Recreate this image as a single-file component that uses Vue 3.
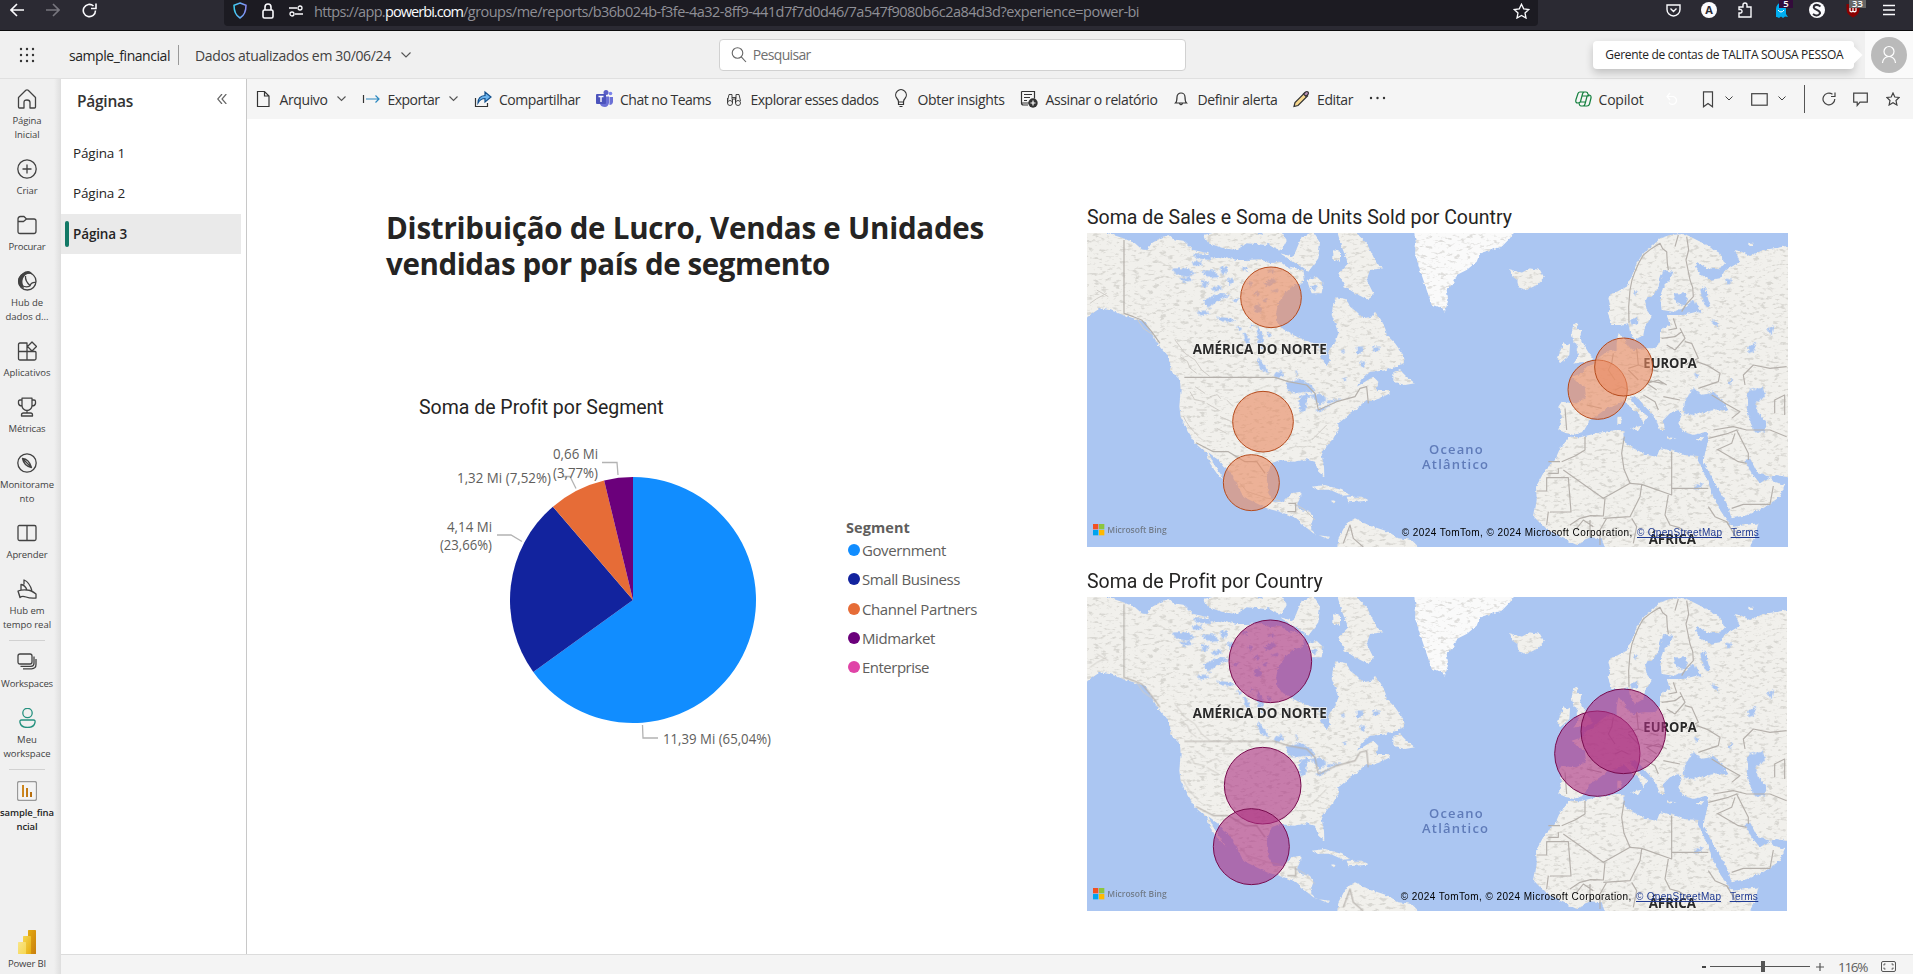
<script setup>
// Tracks a label out (or in) so that it fills the given width.
const vFit = {
  mounted(el, { value }) {
    const n = el.textContent.length
    el.style.letterSpacing = (value - el.getBoundingClientRect().width) / n + 'px'
  },
}

const tools = [
  { id: 'file', label: 'Arquivo', w: 48, more: true },
  { id: 'export', label: 'Exportar', w: 52, more: true },
  { id: 'share', label: 'Compartilhar', w: 81 },
  { id: 'teams', label: 'Chat no Teams', w: 91 },
  { id: 'explore', label: 'Explorar esses dados', w: 128 },
  { id: 'bulb', label: 'Obter insights', w: 87 },
  { id: 'subscribe', label: 'Assinar o relatório', w: 112 },
  { id: 'bell', label: 'Definir alerta', w: 80 },
  { id: 'pencil', label: 'Editar', w: 36 },
]

const nav = [
  { id: 'home', lines: [['Página', 29], ['Inicial', 25]] },
  { id: 'plus', lines: [['Criar', 21]] },
  { id: 'folder', lines: [['Procurar', 37]] },
  { id: 'hub', lines: [['Hub de', 32], ['dados d...', 43]] },
  { id: 'apps', lines: [['Aplicativos', 47]] },
  { id: 'cup', lines: [['Métricas', 37]] },
  { id: 'compass', lines: [['Monitorame', 54], ['nto', 15]] },
  { id: 'book', lines: [['Aprender', 41]] },
  { id: 'live', lines: [['Hub em', 35], ['tempo real', 48]] },
  { id: 'spaces', sep: true, lines: [['Workspaces', 52]] },
  { id: 'me', lines: [['Meu', 20], ['workspace', 47]] },
  { id: 'report', sep: true, active: true, lines: [['sample_fina', 54], ['ncial', 21]] },
]

const segments = [
  { label: 'Government', w: 84, color: '#118DFF', share: 65.05 },
  { label: 'Small Business', w: 98, color: '#12239E', share: 23.66 },
  { label: 'Channel Partners', w: 115, color: '#E66C37', share: 7.52 },
  { label: 'Midmarket', w: 73, color: '#6B007B', share: 3.77 },
  { label: 'Enterprise', w: 67, color: '#E044A7', share: 0 },
]

function slices() {
  let acc = 0
  const pt = (f) => {
    const a = f * 2 * Math.PI
    return `${(213 + 123 * Math.sin(a)).toFixed(2)} ${(170 - 123 * Math.cos(a)).toFixed(2)}`
  }
  return segments.filter((s) => s.share).map((s) => {
    const from = acc
    acc += s.share / 100
    return { color: s.color, d: `M213 170L${pt(from)}A123 123 0 ${s.share > 50 ? 1 : 0} 1 ${pt(acc)}Z` }
  })
}
const pie = slices()

const maps = [
  {
    id: 'sales', title: 'Soma de Sales e Soma de Units Sold por Country', w: 425, credit: 965,
    bubbles: [[573, 292, 91], [549, 665, 91], [514, 848, 84], [1553, 569, 89], [1631, 501, 87]],
  },
  {
    id: 'profit', title: 'Soma de Profit por Country', w: 235, credit: 962,
    bubbles: [[571, 292, 124], [548, 665, 115], [514, 848, 114], [1552, 569, 128], [1630, 502, 127]],
  },
]
</script>

<template>
  <div class="window">
    <svg class="defs" width="0" height="0">
      <filter id="coast" x="0" y="0" width="100%" height="100%" color-interpolation-filters="sRGB">
        <feTurbulence type="fractalNoise" baseFrequency="0.09" numOctaves="3" seed="4" result="n" />
        <feDisplacementMap in="SourceGraphic" in2="n" scale="10" xChannelSelector="R" yChannelSelector="G" result="land" />
        <feTurbulence type="fractalNoise" baseFrequency="0.05 0.11" numOctaves="3" seed="9" result="hills" />
        <feColorMatrix in="hills" type="matrix" values="0 0 0 0 0.62  0 0 0 0 0.61  0 0 0 0 0.58  5 0 0 0 -2.7" result="shade" />
        <feComposite in="shade" in2="land" operator="in" result="cut" />
        <feComponentTransfer in="cut" result="soft"><feFuncA type="linear" slope="0.3" /></feComponentTransfer>
        <feMerge><feMergeNode in="land" /><feMergeNode in="soft" /></feMerge>
      </filter>
      <filter id="rough" x="0" y="0" width="100%" height="100%">
        <feTurbulence type="fractalNoise" baseFrequency="0.13" numOctaves="2" seed="2" />
        <feDisplacementMap in="SourceGraphic" scale="14" xChannelSelector="R" yChannelSelector="G" />
      </filter>
      <linearGradient id="shieldTone" x1="0" y1="0" x2="1" y2="0"><stop offset="0" stop-color="#3fd0f5" /><stop offset="1" stop-color="#8a8cf5" /></linearGradient>
      <linearGradient id="biA" x1="0" y1="0" x2="1" y2="1"><stop offset="0" stop-color="#e6ad10" /><stop offset="1" stop-color="#c87e0e" /></linearGradient>
      <linearGradient id="biB" x1="0" y1="0" x2="1" y2="1"><stop offset="0" stop-color="#f6d751" /><stop offset="1" stop-color="#e6ad10" /></linearGradient>
      <linearGradient id="biC" x1="0" y1="0" x2="1" y2="1"><stop offset="0" stop-color="#f9e589" /><stop offset="1" stop-color="#f6d751" /></linearGradient>
      <linearGradient id="barTone" x1="0" y1="0" x2="1" y2="0"><stop offset="0" stop-color="#d08a20" /><stop offset="1" stop-color="#b56c0c" /></linearGradient>
    </svg>

    <div class="browser">
      <div class="browser-nav">
        <svg width="14" height="14" viewBox="0 0 14 14" class="ln white"><path d="M14 7H1M7 1L1 7l6 6" /></svg>
        <svg width="14" height="14" viewBox="0 0 14 14" class="ln dim"><path d="M0 7h13M7 1l6 6-6 6" /></svg>
        <svg width="15" height="15" viewBox="0 0 15 15" class="ln white"><path d="M13.5 7.5a6.1 6.1 0 1 1-2-4.5M14 0.5v5h-5" /></svg>
      </div>
      <div class="url">
        <svg width="14" height="17" viewBox="0 0 14 17"><path d="M7 1L13 3.3C13 10 11.5 13.500 7 16 2.500 13.500 1 10 1 3.300Z" fill="none" stroke="url(#shieldTone)" stroke-width="1.500" /></svg>
        <svg width="12" height="16" viewBox="0 0 12 16" class="ln white"><rect x="1" y="7" width="10" height="8" rx="1.500" /><path d="M3 7V4a3 3 0 0 1 6 0v3" /></svg>
        <svg width="14" height="12" viewBox="0 0 14 12" class="ln white thin"><path d="M0 3h8M6 9h8" /><circle cx="11" cy="3" r="2" /><circle cx="3" cy="9" r="2" /></svg>
        <span class="address"><span v-fit="71">https://app.</span><b v-fit="78">powerbi.com</b><span v-fit="676">/groups/me/reports/b36b024b-f3fe-4a32-8ff9-441d7f7d0d46/7a547f9080b6c2a84d3d?experience=power-bi</span></span>
        <svg class="end" width="17" height="16" viewBox="0 0 17 16"><path d="M8.500 1.200l2.200 4.700 5 .6-3.700 3.500 1 5-4.500-2.500L4 15l1-5L1.300 6.500l5-.6z" fill="none" stroke="#fbfbfe" stroke-width="1.300" /></svg>
      </div>
      <div class="extensions">
        <svg width="36" height="24" viewBox="0 0 36 24" class="ln light"><path d="M12 5h13v4.500a6.500 6.500 0 0 1-13 0zM15.500 8.500l3 3 3-3" /></svg>
        <svg width="36" height="24" viewBox="0 0 36 24"><circle cx="18" cy="10" r="8" fill="#fbfbfe" /><text x="18" y="14" class="glyph" text-anchor="middle">A</text></svg>
        <svg width="36" height="24" viewBox="0 0 36 24" class="ln light"><path d="M12 17v-4h2a2 2 0 0 0 0-3.500h-2V7h4V5a2 2 0 0 1 4 0v2h4v10z" /></svg>
        <svg width="36" height="24" viewBox="0 0 36 24"><path d="M13 17V9a5 6 0 0 1 10 0v5l2 3-3-.5-2 1.500-2-1.500-2 1.500-2-1z" fill="#00aef0" /><path d="M15 10q3 4 6 0" stroke="#fff" fill="none" /><rect x="16" y="0" width="14" height="8" fill="#330b3b" /><text x="23" y="7" class="badge-num" text-anchor="middle">5</text></svg>
        <svg width="36" height="24" viewBox="0 0 36 24"><circle cx="18" cy="10" r="8" fill="#fbfbfe" /><path d="M21.500 6.500q-4-3-6.500-.5c-2 4 7 3.500 6 7.500-2 3-5 2-7 .5" fill="none" stroke="#2b2a33" stroke-width="2" /></svg>
        <svg width="36" height="24" viewBox="0 0 36 24"><path d="M11.500 4h13v5q0 5.500-6.500 8.500-6.500-3-6.500-8.500z" fill="#8a0000" /><path d="M15 8v3q1.500 1.500 3 0V8m0 3q1.500 1.500 3 0V8" stroke="#fff" fill="none" stroke-width="1.200" /><rect x="14" y="0" width="17" height="8" fill="#666" /><text x="22.500" y="7" class="badge-num" text-anchor="middle">33</text></svg>
        <svg width="36" height="24" viewBox="0 0 36 24" class="ln light"><path d="M12 5.500h12M12 10h12M12 14.500h12" /></svg>
      </div>
    </div>

    <header class="header">
      <svg class="waffle" width="16" height="16" viewBox="0 0 16 16"><g fill="#333"><circle v-for="i in 9" :key="i" :cx="2 + ((i - 1) % 3) * 6" :cy="2 + Math.floor((i - 1) / 3) * 6" r="1.200" /></g></svg>
      <span class="doc"><span v-fit="101">sample_financial</span></span>
      <span class="fresh"><span v-fit="196">Dados atualizados em 30/06/24</span></span>
      <svg class="chev" width="10" height="6" viewBox="0 0 10 6"><path d="M.5.5L5 5 9.500.5" /></svg>
      <div class="search">
        <svg width="16" height="16" viewBox="0 0 16 16"><g fill="none" stroke="#666" stroke-width="1.100"><circle cx="6.500" cy="6" r="5.300" /><path d="M10.300 9.800L15 15" /></g></svg>
        <span v-fit="58">Pesquisar</span>
      </div>
      <div class="tip"><span v-fit="238">Gerente de contas de TALITA SOUSA PESSOA</span></div>
      <div class="account"><svg width="36" height="36" viewBox="0 0 36 36"><circle cx="18" cy="18" r="18" fill="#bababa" /><g fill="none" stroke="#fff" stroke-width="1.200"><circle cx="18" cy="14.500" r="5" /><path d="M11.500 26a6.500 6.500 0 0 1 13 0" /></g></svg></div>
    </header>

    <div class="body">
      <nav class="rail">
        <template v-for="n in nav" :key="n.id">
          <hr v-if="n.sep" />
          <div class="rail-item" :class="{ active: n.active }">
            <svg width="20" height="20" viewBox="0 0 20 20" class="ri">
              <path v-if="n.id === 'home'" d="M1.500 8.500L8.800 1.300q1.200-1 2.400 0l7.300 7.200V18q0 1-1 1H13v-5.500q0-2.500-3-2.500t-3 2.500V19H2.500q-1 0-1-1z" />
              <template v-else-if="n.id === 'plus'"><circle cx="10" cy="10" r="9.200" /><path d="M10 5.500v9M5.500 10h9" /></template>
              <path v-else-if="n.id === 'folder'" d="M1 15V4q0-2.500 2.500-2.500H7L9.500 4H17q2 0 2 2v10q0 2.500-2 2.500H3Q1 18.500 1 16.500zM1 6.500h5.500L9.500 4" />
              <template v-else-if="n.id === 'hub'"><circle cx="10.300" cy="10.300" r="8.700" /><path d="M6 2Q8 0 11 0t5 3.500Q12 1.800 8.500 4 5 7 5.500 12L7 17.500Q1 15.500 1 10 1 6 6 2z" fill="#424242" stroke="none" /><path d="M8.500 5q-.5 5 4.500 9.500M13 15q1-4 6-3.500M5 14.500q4 2.500 8 .5" /></template>
              <path v-else-if="n.id === 'apps'" d="M1.500 10.500V3.500q0-1.500 1.500-1.500h7v17H3q-1.500 0-1.500-1.500zh16.500q1 0 1 1v6q0 1.500-1.500 1.500H10M15 1l4.500 4.500L15 10 10.500 5.500z" />
              <path v-else-if="n.id === 'cup'" d="M5 1.200h10v7.300a5 5 0 0 1-10 0zM5 3H3Q1.500 3 1.500 4.500v2Q2 9 5 9M15 3h2q1.500 0 1.500 1.500v2Q18 9 15 9M10 13.500V16M4.500 19v-1q0-2 2-2h7q2 0 2 2v1z" />
              <template v-else-if="n.id === 'compass'"><circle cx="10" cy="10" r="9.200" /><path d="M5.500 5.500Q12 6 14.500 14.500 7 13 5.500 5.500zM5.500 5.500l9 9" /></template>
              <path v-else-if="n.id === 'book'" d="M10 2.500H2.500Q1 2.500 1 4v12q0 1.500 1.500 1.500H10zh7.500Q19 2.500 19 4v12q0 1.500-1.500 1.500H10" />
              <path v-else-if="n.id === 'live'" d="M1 12q4-1.500 9-1 4 0 9 4v4q-6 .5-10-1t-6 .5zM4 11V5.500q4 .5 6 5.500M7 5.500V1q5.500 2 8 11M1 12l2 6" />
              <path v-else-if="n.id === 'spaces'" d="M3 2h10q2 0 2 2v6q0 2-2 2H3q-2 0-2-2V4q0-2 2-2zM3.500 14.300H14q3 0 3-3V4.500M6 16.800h8.500q4.500 0 4.500-4.500V7" />
              <g v-else-if="n.id === 'me'" stroke="#25917f"><circle cx="10.500" cy="5" r="4.700" /><path d="M4.500 12h12q2 0 1.500 2.500-1 5-7.500 5t-7.500-5Q2.500 12 4.500 12z" /></g>
              <g v-else stroke="none"><rect x=".5" y=".5" width="19" height="19" rx="2" fill="#f4f4f4" stroke="#999" /><path d="M5 4h2v12H5zM9 7h2v9H9zM13 11h2v5h-2z" fill="url(#barTone)" /></g>
            </svg>
            <span v-for="l in n.lines" :key="l[0]" class="rail-line"><span v-fit="l[1]">{{ l[0] }}</span></span>
          </div>
        </template>
        <div class="brand">
          <svg width="18" height="24" viewBox="0 0 18 24"><rect x="10" width="8" height="24" rx=".6" fill="url(#biA)" /><rect x="5" y="6" width="8" height="18" rx=".6" fill="url(#biB)" /><rect y="12" width="8" height="12" rx=".6" fill="url(#biC)" /></svg>
          <span v-fit="38">Power BI</span>
        </div>
      </nav>

      <div class="work">
        <div class="panes">
          <aside class="pages">
            <div class="pages-head"><b v-fit="56">Páginas</b><svg width="10" height="10" viewBox="0 0 10 10"><path d="M5 0L.7 5 5 10M9.300 0L5 5l4.300 5" fill="none" stroke="#666" stroke-width="1.200" /></svg></div>
            <ul>
              <li><span v-fit="52">Página 1</span></li>
              <li><span v-fit="52">Página 2</span></li>
              <li class="on"><i></i><span v-fit="54">Página 3</span></li>
            </ul>
          </aside>

          <section class="content">
            <div class="toolbar">
              <div v-for="t in tools" :key="t.id" class="tool">
                <svg width="24" height="20" viewBox="0 0 24 20" class="ti">
                  <path v-if="t.id === 'file'" d="M6.500 2.500H13.500L18 7v10.500H6.500zM13.500 2.500V7H18" />
                  <template v-else-if="t.id === 'export'"><path d="M4.500 6v8" /><path d="M7 10h13M16.500 6.500L20 10l-3.500 3.500" stroke="#2b88c0" /></template>
                  <template v-else-if="t.id === 'share'"><path d="M4.500 9v8.500h12V14" /><path d="M7 14q0-7 7-7.500V3l6 5-6 5v-3.500Q9.500 9.500 7 14z" fill="#6cb4ee" stroke="#124f8c" /></template>
                  <g v-else-if="t.id === 'teams'" stroke="none"><circle cx="14" cy="3.500" r="2.500" fill="#5b5fc7" /><circle cx="18.500" cy="4.500" r="1.800" fill="#7b83eb" /><path d="M10 7.500h7V14q-1 4-4 4-4 0-5-3zM17.500 8h3.500v5q-.5 3-3.500 3z" fill="#6b70d6" /><rect x="4" y="5" width="10" height="10" rx="1" fill="#4b53bc" /><path d="M6.500 7.500h5M9 7.500v5.500" stroke="#fff" stroke-width="1.400" /></g>
                  <path v-else-if="t.id === 'explore'" d="M7 5.500h3v5M14 10.500v-5h3M7 5.500L5.500 12M17 5.500l1.500 6.500M10 8.500h4M5.500 14a2.500 2.500 0 1 1 5 0 2.500 2.500 0 1 1-5 0V9M13.500 14a2.500 2.500 0 1 1 5 0 2.500 2.500 0 1 1-5 0V9M10.500 14v-4h3v4" stroke-width=".9" />
                  <path v-else-if="t.id === 'bulb'" d="M9.500 13q0-2-1.500-3.500A5.300 5.300 0 1 1 16 9.500Q14.500 11 14.500 13zM9.500 13v2.500h5V13M10.500 17.500h3" />
                  <template v-else-if="t.id === 'subscribe'"><path d="M4.500 2.500h13v7M4.500 2.500V14H12M4.500 14q0 2 2 2H11M7 5.500h8M7 8.500h6M7 11.500h3" /><circle cx="16" cy="14" r="4.700" fill="#333" stroke="none" /><path d="M16 11.500v5M13.500 14h5" stroke="#fff" /></template>
                  <path v-else-if="t.id === 'bell'" d="M6.500 14q1.500-1.500 1.500-6a4 4 0 0 1 8 0q0 4.500 1.500 6zM10.500 14.500q1.500 2.500 3 0" />
                  <template v-else><path d="M5 17.500l1-4L15.500 4l3 3L9 16.500z" fill="#f8d88e" stroke="#333" /><path d="M14.500 5l2-2q1.500-1 2.500 0t0 2.500l-2 2z" fill="#b98fb5" stroke="#333" /></template>
                </svg>
                <span class="tool-label"><span v-fit="t.w">{{ t.label }}</span></span>
                <svg v-if="t.more" class="chev" width="9" height="6" viewBox="0 0 9 6"><path d="M.5.5l4 4 4-4" /></svg>
              </div>
              <svg width="24" height="20" viewBox="0 0 24 20" fill="#333"><circle cx="5" cy="9" r="1.200" /><circle cx="11.500" cy="9" r="1.200" /><circle cx="18" cy="9" r="1.200" /></svg>
              <div class="right">
                <svg width="17" height="18" viewBox="0 0 17 18" fill="none" stroke="#15803f" stroke-width="1.300"><path d="M5 2h6q1.500 0 2 2l1 2.500M9.500 2Q8 2 7.500 4L5.500 11.500Q5 13 3 13 0 13 1 9.500L3 3.500Q3.500 2 5 2M12 16H6q-1.500 0-2-3M8 16q1.500 0 2-2l2-7.500q.5-1.500 2.500-1.500 2 .5 1.500 3L14.500 14q-.5 2-2.500 2M7 6h6M5 12h6" /></svg>
                <span v-fit="45">Copilot</span>
                <svg class="undo" width="12" height="14" viewBox="0 0 12 14"><path d="M1 4.500h6a4 4 0 1 1-4 6M4 1L1 4.500 4 8" /></svg>
                <svg class="mark" width="12" height="17" viewBox="0 0 12 17"><path d="M1.500.8h9v15L6 12.500l-4.500 3.300z" /></svg>
                <svg class="chev c1" width="8" height="6" viewBox="0 0 8 6"><path d="M.5.5L4 4 7.500.5" /></svg>
                <svg class="frame" width="17" height="13" viewBox="0 0 17 13"><rect x=".7" y=".7" width="15.500" height="11.500" /></svg>
                <svg class="chev c2" width="8" height="6" viewBox="0 0 8 6"><path d="M.5.5L4 4 7.500.5" /></svg>
                <i class="rule"></i>
                <svg width="14" height="14" viewBox="0 0 14 14"><path d="M12.800 7A5.900 5.900 0 1 1 10.500 2.300M9 4.500h4V.5" /></svg>
                <svg class="say" width="15" height="15" viewBox="0 0 15 15"><path d="M.7 1.200h13.600v9H7L4.200 13.500v-3.300H.7z" /></svg>
                <svg class="fav" width="14" height="14" viewBox="0 0 14 14"><path d="M7 1l1.800 4 4.400.5L10 8.500l.9 4.500L7 10.800 3.100 13 4 8.500.8 5.500 5.200 5z" /></svg>
              </div>
            </div>

            <div class="canvas">
              <div class="left">
                <h1><span v-fit="598">Distribuição de Lucro, Vendas e Unidades</span><br /><span v-fit="444">vendidas por país de segmento</span></h1>
                <h2 class="pie-title"><span v-fit="244">Soma de Profit por Segment</span></h2>
                <div class="pie-row">
                  <svg class="pie" width="400" height="330" viewBox="0 0 400 330">
                    <path v-for="s in pie" :key="s.color" :d="s.d" :fill="s.color" />
                    <g fill="none" stroke="#b3b3b3" stroke-width="1.300"><path d="M182 32.500h15l1 12.500M142 46.500h8l6 12M77 105h14l11 6.500M222.500 295l.5 13h15" /></g>
                    <g class="pie-label">
                      <text x="133" y="29" textLength="45" lengthAdjust="spacingAndGlyphs">0,66 Mi</text>
                      <text x="133" y="47.500" textLength="45" lengthAdjust="spacingAndGlyphs">(3,77%)</text>
                      <text x="37" y="53" textLength="94" lengthAdjust="spacingAndGlyphs">1,32 Mi (7,52%)</text>
                      <text x="27" y="102" textLength="45" lengthAdjust="spacingAndGlyphs">4,14 Mi</text>
                      <text x="20" y="120" textLength="52" lengthAdjust="spacingAndGlyphs">(23,66%)</text>
                      <text x="243" y="314" textLength="108" lengthAdjust="spacingAndGlyphs">11,39 Mi (65,04%)</text>
                    </g>
                  </svg>
                  <div class="legend">
                    <b v-fit="64">Segment</b>
                    <div v-for="s in segments" :key="s.label"><svg width="12" height="12"><circle cx="6" cy="6" r="6" :fill="s.color" /></svg><span v-fit="s.w">{{ s.label }}</span></div>
                  </div>
                </div>
              </div>

              <div class="maps">
                <figure v-for="m in maps" :key="m.id" :class="m.id">
                  <figcaption><span v-fit="m.w">{{ m.title }}</span></figcaption>
                  <svg class="map" viewBox="21 99 2103 942" preserveAspectRatio="xMinYMin slice">
                    <rect x="21" y="99" width="2103" height="942" fill="#abc6f2" />
                    <g filter="url(#coast)" fill="#f1f0ec">
                      <path d="M0 80L80 98 130 115 165 130 185 148 200 150 215 130 240 115 265 105 280 118 310 122 340 150 385 160 400 175 440 172 470 180 500 180 540 178 570 190 600 185 620 200 650 220 670 225 665 250 640 255 615 280 595 310 588 340 592 365 605 385 640 405 670 420 700 430 715 440 725 475 740 498 750 480 745 450 765 430 775 400 765 370 755 345 760 310 770 292 800 298 810 320 830 335 850 355 875 350 885 335 900 355 915 380 920 405 945 430 970 465 975 485 950 500 910 512 870 515 845 540 830 560 880 530 895 545 890 570 925 570 930 580 900 595 870 605 860 600 830 625 800 650 775 670 775 690 760 715 735 745 725 765 732 800 733 830 715 815 705 785 680 778 640 785 600 780 575 790 560 830 565 880 580 905 610 905 635 880 662 875 660 895 650 915 660 930 690 935 700 955 690 985 710 1005 750 1010 745 1017 700 1000 670 975 640 950 600 935 560 925 520 905 490 890 470 850 450 815 430 800 415 780 385 757 400 790 420 820 440 850 410 820 390 790 380 760 345 730 320 690 302 650 298 620 302 570 300 540 270 510 275 490 255 460 235 435 215 400 195 365 160 355 130 345 90 330 60 325 30 345 0 370Z" />
                      <path d="M370 105L440 90 520 95 580 115 560 135 500 130 470 150 430 145 385 130ZM540 90h60l20 30-15 30-30-10zM600 160l40 10 25-60 35-15 20 30-5 50-30 40-30-20zM630 200l40 10 5 30-30 10zM680 240l30-10 20 20-5 30-30 0zM770 90l50 0 40 40 30 60 20 15-40 5-10 30 20 40-15 20-40-20-30-20-20-40 30-30-20-50zM760 150l20 5 0 30-20-5zM940 520l20-10 20 20 25 20-30 5-35-10z" />
                      <path d="M695 860l40-5 50 15 25 15-20 2-40-18-40 0zM800 890l45 0 20 12-60 5zM755 900l20 5-20 2zM770 1060l5-45 25-45 25-15 40 20 60 20 30 20 40 5 20 20 60 20z" />
                      <g transform="translate(1050)">
                        <path d="M-50 80L-42 130-45 160-30 210-10 270 5 315 30 322 45 335 55 300 50 270 70 250 80 225 110 210 140 185 150 160 180 150 215 140 240 115 265 80Z" fill="#fafafa" />
                        <path d="M240 208l22 7 13 3 25-13 30 5 12 22-22 23-30 15-25-8-3-22-17-12zM430 372l12-4-2 22 15 0-5 20 15 30 15 25 15 10-15 10-30 2-20 5 15-22-5-20 5-15-15-10-5-25zM400 430l20 5-2 30-28 25-7-12 7-23z" />
                        <path d="M600 395L595 370 570 375 545 375 535 345 540 315 535 290 560 275 590 260 605 230 620 190 640 160 670 135 690 115 720 105 765 102 790 115 820 130 870 160 885 190 870 208 830 205 800 185 795 200 815 225 840 240 870 235 880 215 905 200 930 185 915 150 935 155 960 168 1000 150 1090 135 1090 835 1040 825 1020 830 980 815 960 775 945 780 965 820 990 850 1020 830 1030 845 1065 855 1050 890 1000 925 950 945 905 955 890 910 855 850 820 785 825 760 835 720 830 695 790 705 760 695 745 670 755 645 745 630 720 640 700 660 705 690 690 690 675 650 650 625 620 590 600 590 605 605 630 630 655 650 640 670 630 645 600 620 580 600 560 615 530 625 510 640 480 660 460 695 430 705 410 700 385 690 395 650 385 620 395 605 430 610 468 595 465 560 440 545 425 530 455 520 470 500 490 490 510 470 530 455 560 450 560 430 565 400 580 410 590 435 610 450 640 445 670 445 690 430 690 390 720 375 710 345 760 345 800 335 790 300 770 320 730 335 695 330 690 290 700 260 720 240 730 215 700 210 690 240 685 265 665 290 645 300 650 330 665 350 645 380 640 405 615 420 605 405Z" />
                        <path d="M420 710L450 712 500 700 560 690 580 695 582 725 610 745 650 765 680 770 690 745 720 750 760 765 805 768 803 780 830 835 850 890 870 930 890 960 910 980 985 970 975 1010 950 1060 530 1060 515 1015 480 1012 440 1035 390 1010 345 985 312 950 320 900 318 860 345 810 375 780 390 745ZM600 685l35-8-10 15zM562 650h12v22h-12zM710 712l30 3-25 4zM795 718l28-8-10 14zM955 128l12 0 0 10-12 0z" />
                      </g>
                    </g>
                    <g filter="url(#rough)" fill="#abc6f2">
                      <path d="M275 205l50 0 20 15-20 10-35-5zM360 215l40-5 20 20-25 5zM420 200l20 0 0 20-15 5zM340 160l60 5-10 15-40-5zM370 300l50-20 30 5-40 20-25 20-10-15zM410 350l40 5 20 10-45 0zM490 395l12 10 10 30-15-5zM530 375l20 30-5 45-10-15zM535 470l10 15 15 20 5 15-20-10-12-20zM520 280l15-10 5 20zM550 250l30-15 10 10-25 15zM570 275l25-10 0 12zM520 320l20-10 5 25-15 5zM580 525l25-15 5 20-20 5zM645 510l10 12-5 5zM620 548l40-12 35 20 10 20-35 0-25 5-25-15zM660 590l20-8 15 5-15 10-3 35-15 5-5-25zM690 585l30-5 20 15-20 25-10-15zM705 630l50-18-35 25zM740 602l50-5-45 14zM830 440l20 0-5 20-15 0zM840 485l15 0 0 15-12 0zM880 440l20 0-5 14-15 0zM780 450l15 0-5 10zM790 535l12-4-8 14zM690 260l22-5-8 20z" />
                      <path d="M300 235l30-5 8 12-28 4zM335 185l28-2 5 14-28 0zM365 240l22 4-8 20-12-6zM440 240l16-8 6 16-14 4zM395 265l26-8 4 12-22 6zM455 300l22-6-8 14zM480 205l20-4 0 14zM350 335l25-4 14 10-30 6zM470 380l16 4-6 12zM545 300l16-6 2 14zM500 250l14-6 2 16zM560 215l20-6 6 10zM560 395l14 8-8 10zM510 370l10 4-6 14z" />
                      <g transform="translate(1050)">
                        <path d="M765 600L790 565 815 585 850 575 880 605 895 635 860 628 820 638 790 645 760 640ZM955 570L1000 563 1005 590 975 610 985 640 1010 665 1005 695 975 697 960 665 950 620ZM600 360l20-10 5 20-20 5zM610 270l15 5-10 10zM730 280l40 0 0 40-30-10zM780 300l20 10 15 30-30-10zM810 270l15-10 15 60-15 0zM840 360l20 5 5 20zM955 440l25-15-10 30-15 5zM1010 390l20-15-5 30zM790 520l20 5-10 8zM895 545l12-10-5 20zM795 855l25-5-10 15-20 5zM910 240l-20 15-5-20zM1060 100l20 0 0 20zM895 100l25 0-12 15z" />
                      </g>
                    </g>
                    <g class="borders">
                      <path d="M132 120V340L160 350 185 360 215 395 240 430M313 532H585L625 545 680 555 705 580 715 630 770 605 825 590 840 565 860 560 865 610M348 728L400 755 445 755 495 785 530 785 555 820M625 910h22v25h-25M790 1030l20-55 10 40 30 26" />
                      <g class="ridges"><path d="M310 648q12 30 45 60M345 560l30 20M380 610l35 20M430 570l30 0M350 630l30 0M420 650l35 15M410 685l30 15M285 420l30 40 30 20 20 30 25 20M300 470l22 14 8 20 20 16M50 270l35 20M30 310l20-14 30-16M480 850l20 24 60 20 40 8M695 720l20-20 25-25M650 915l25 15 30 30M170 355l20 30 30 20M330 575l14 24 30 6M390 590l22-6 10 12M440 600l20 20" /></g>
                      <g transform="translate(1050)"><path d="M597 370L596 320 600 270 606 240 615 215 626 190 640 165 664 146 690 130 698 146 710 155 712 190 715 210M745 105L735 140M770 110L776 150 768 180 774 210 780 240 788 262 790 290 768 314 755 335M730 355l10 30-25 5M695 415l40-5 20-15M750 385l15 30-30 35-25-15M765 425l20 5 20 45-40 20M800 485l34 12 36 23-5 25-60 20M620 445l5 50-30 10M625 495l60 20M595 510l30 30M640 540l60 10M680 570l-30-20 35-10 25 15M700 590l50 10M640 585l35 20 10 25M550 460l-5 30-10 20 20 30M555 570l20-10 20 10M470 615l45 10M405 625l5 65M905 655l25-20-40-22-45-28M945 555l-5-30 30-30 50 10 50-5M1034 640v-40l30-15v60M850 690l60-10 40 10 70 0 50 20M835 715l60-15 25-10 10 20 25 50 0 20M860 750l45-20 10-30M865 750l60 35 25 5M905 925l35-12 80 0 10-55M465 710l0 40-30 18-40 17M400 810l120 85 80-45-18-42-7-48 3-20 5-30M725 755V885L635 853 600 850M725 865h110M390 785h-35M355 820h30v-15M320 873h30v-40h65l8 103h-63M355 935l-5 40M420 975l30-20 32-8 38 1 5-53M520 955l80-5 30-60 5-35M610 1030l10-50-15-25M715 885l-10 60 15 30 28 8 32 22M835 920l20 30 35 15 30 50M440 985l20-25 30 20M480 1010v-50M510 1035v-45l20-35" /></g>
                    </g>
                    <g class="places">
                      <text x="338" y="463" textLength="402" lengthAdjust="spacingAndGlyphs">AMÉRICA DO NORTE</text>
                      <text x="1690" y="505" textLength="160" lengthAdjust="spacingAndGlyphs">EUROPA</text>
                      <text x="1706" y="1033" textLength="142" lengthAdjust="spacingAndGlyphs">ÁFRICA</text>
                      <g class="ocean"><text x="1047" y="763" textLength="161">Oceano</text><text x="1026" y="808" textLength="198">Atlântico</text></g>
                    </g>
                    <g class="bubbles"><circle v-for="(b, i) in m.bubbles" :key="i" :cx="b[0]" :cy="b[1]" :r="b[2]" /></g>
                    <g><path d="M39 972h16v16H39z" fill="#f25022" /><path d="M57 972h16v16H57z" fill="#8cc63e" /><path d="M39 990h16v16H39z" fill="#00a4ef" /><path d="M57 990h16v16H57z" fill="#ffb900" /><text class="bing" x="82" y="1000" textLength="178" lengthAdjust="spacingAndGlyphs">Microsoft Bing</text></g>
                    <g class="credit">
                      <text :x="m.credit" y="1007" textLength="692">© 2024 TomTom, © 2024 Microsoft Corporation,</text>
                      <text :x="m.credit + 706" y="1007" textLength="255" class="link">© OpenStreetMap</text>
                      <text :x="m.credit + 988" y="1007" textLength="83" class="link">Terms</text>
                      <path :d="`M${m.credit + 706} 1012.500h255M${m.credit + 987} 1012.500h86`" />
                    </g>
                  </svg>
                </figure>
              </div>
            </div>
          </section>
        </div>
        <footer class="status">
          <svg width="116" height="12" viewBox="0 0 116 12"><path d="M8 5.500h100" stroke="#555" stroke-width="1.200" /><path d="M0 6h4" stroke="#444" stroke-width="2" /><rect x="59" y="0" width="4" height="11" fill="#555" /></svg>
          <svg width="8" height="8" viewBox="0 0 8 8"><path d="M4 0v8M0 4h8" stroke="#555" stroke-width="1.200" /></svg>
          <span class="pct"><span v-fit="29">116%</span></span>
          <svg width="15" height="11" viewBox="0 0 15 11"><g fill="none" stroke="#555"><rect x=".5" y=".5" width="14" height="10" rx="1.500" /><path d="M3 4.500V3h1.500M12 4.500V3h-1.500M3 6.500V8h1.500M12 6.500V8h-1.500" /></g></svg>
        </footer>
      </div>
    </div>
  </div>
</template>

<style>
body { overflow: hidden; }
</style>

<style scoped>
* { box-sizing: border-box; }
.window { width: 1913px; height: 974px; display: flex; flex-direction: column; font-family: "Open Sans", "Noto Sans", sans-serif; font-size: 14px; color: #333; background: #fff; white-space: nowrap; overflow: hidden; }
.window svg { display: block; flex: none; }
.window span[style], .window b { display: inline-block; }
.defs { position: absolute; }

.browser { height: 31px; flex: none; display: flex; background: #2b2a33; border-bottom: 1px solid #0c0c0d; }
.browser-nav { width: 224px; height: 20px; display: flex; align-items: center; gap: 22px; padding-left: 10px; }
.ln { fill: none; stroke-width: 1.600; }
.white, .light { stroke: #fbfbfe; }
.light { stroke-width: 1.400; }
.thin { stroke-width: 1.300; }
.dim { stroke: #77767e; }
.url { width: 1314px; height: 26px; display: flex; align-items: center; padding: 0 8px 5px 9px; background: #1c1b22; border-radius: 0 0 4px 4px; }
.url svg + svg { margin-left: 15px; }
.address { margin-left: 11px; font-size: 14.500px; color: #8f8f96; height: 21px; line-height: 23px; display: flex; }
.address b { font-weight: 400; color: #fbfbfe; }
.url .end { margin-left: auto; }
.extensions { display: flex; margin-left: 117px; }
.glyph { font: 700 11px "Open Sans"; fill: #2b2a33; }
.badge-num { font: 600 9.500px "Open Sans"; fill: #fff; }

.header { height: 48px; flex: none; display: flex; align-items: center; background: #f0f0f0; border-bottom: 1px solid #e0e0e0; padding-left: 19px; }
.doc { margin-left: 34px; width: 110px; height: 20px; line-height: 21px; border-right: 1px solid #999; color: #242424; }
.fresh { margin-left: 16px; width: 206px; height: 20px; line-height: 21px; color: #424242; }
.chev { fill: none; stroke: #555; stroke-width: 1.100; }
.search { margin-left: 308px; width: 468px; height: 32px; display: flex; align-items: center; gap: 6px; padding-left: 11px; background: #fff; border: 1px solid #d1d1d1; border-radius: 4px; color: #707070; }
.tip { position: relative; margin-left: 407px; width: 261px; height: 28px; line-height: 28px; padding-left: 12px; background: #fff; border-radius: 4px; font-size: 12px; color: #242424; box-shadow: 0 4px 9px rgba(0, 0, 0, .2); }
.tip::after { content: ""; position: absolute; right: -6px; top: 8px; width: 12px; height: 12px; background: #fff; transform: rotate(45deg); }
.account { margin-left: 11px; width: 48px; height: 47px; background: #fafafa; display: grid; place-items: center; }

.body { flex: 1; min-height: 0; display: flex; background: #f0f0f0; }
.rail { width: 61px; flex: none; padding-top: 5px; display: flex; flex-direction: column; background: linear-gradient(to right, #f0f0f0 54px, #dedede 61px); }
.rail-item { width: 54px; padding: 5px 0 12px; display: flex; flex-direction: column; align-items: center; font-size: 9.500px; color: #424242; }
.rail-item .ri { margin-bottom: 5px; }
.rail-line { height: 14px; line-height: 13px; display: flex; justify-content: center; }
.active { font-weight: 600; color: #242424; }
.ri { fill: none; stroke: #424242; stroke-width: 1.300; stroke-linejoin: round; }
.rail hr { width: 36px; height: 1px; border: 0; margin: -4px 0 6px 9px; background: #d1d1d1; flex: none; }
.brand { margin-top: auto; width: 54px; height: 44px; display: flex; flex-direction: column; align-items: center; gap: 3px; font-size: 9.500px; line-height: 13px; color: #424242; }

.work { flex: 1; display: flex; flex-direction: column; min-width: 0; }
.panes { flex: 1; display: flex; min-height: 0; }
.pages { width: 186px; flex: none; background: #fff; border-right: 1px solid #c8c8c8; }
.pages-head { display: flex; align-items: center; justify-content: space-between; padding: 0 19px 0 16px; height: 43px; font-size: 15.500px; }
.pages-head b { font-weight: 600; }
.pages-head svg { margin-bottom: 4px; }
.pages ul { list-style: none; margin: 12px 0 0; padding: 0; }
.pages li { width: 180px; height: 40px; line-height: 38px; padding-left: 12px; color: #242424; font-size: 13.500px; }
.pages li.on { display: flex; align-items: center; gap: 4px; padding-left: 4px; background: #eaeaea; font-weight: 600; }
.pages li i { width: 4px; height: 26px; border-radius: 2px; background: #117865; }

.content { flex: 1; display: flex; flex-direction: column; background: #fff; min-width: 0; }
.toolbar { height: 40px; flex: none; display: grid; grid-template-columns: 108px 111.500px 121px 130.500px 167px 128px 152px 119.500px 77px 24px 1fr; align-items: center; padding-left: 4px; background: #f5f5f5; font-size: 14px; color: #333; }
.tool { display: flex; align-items: center; }
.ti { fill: none; stroke: #333; stroke-width: 1.200; }
.tool-label { margin: 1px 9px 0 4.500px; }
.right { display: flex; align-items: center; padding-left: 185px; }
.right > svg { fill: none; stroke: #424242; stroke-width: 1.200; }
.right > svg:first-child { stroke: #15803f; margin-right: 7px; }
.right > .undo { margin-left: 22px; stroke: #fff; }
.right .mark { margin-left: 24px; }
.right > .c1 { margin-left: 11px; stroke-width: 1; }
.right .frame { margin-left: 18px; }
.right > .c2 { margin-left: 10px; stroke-width: 1; }
.right .rule { width: 1px; height: 28px; margin: 0 17px 0 18px; background: #555; }
.right .say { margin-left: 17px; }
.right .fav { margin-left: 18px; }

.canvas { flex: 1; display: flex; min-height: 0; }
.left { width: 840px; flex: none; }
h1 { margin: 91px 0 0 139px; font: 700 29.500px/36px "Open Sans", sans-serif; color: #252423; }
h2, figcaption { margin: 0; font: 400 19.500px/24px Roboto, sans-serif; color: #252423; }
.pie-title { margin: 114px 0 0 172px; }
.pie-row { display: flex; margin-left: 173px; margin-top: 9.500px; }
.pie-label { font-size: 14px; fill: #605e5c; }
.legend { margin: 87px 0 0 27px; font-size: 15px; color: #605e5c; }
.legend b { line-height: 22px; font-size: 14.500px; height: 22px; margin-left: -1px; }
.legend div { display: flex; align-items: center; gap: 2px; height: 29.300px; margin-left: 1px; }
.legend b + div { margin-top: -3px; }

.maps { width: 701px; }
figure { margin: 0; }
.sales { margin-top: 86px; }
.profit { margin-top: 22px; }
figcaption { height: 28px; line-height: 25px; }
.map { width: 701px; height: 314px; }
.profit .map { width: 700px; }
.borders { fill: none; stroke: #b5b0ab; stroke-width: 3.500; stroke-linejoin: round; }
.ridges { stroke: #cfccc7; stroke-width: 3; }
.places { font: 700 40px "Open Sans", sans-serif; fill: #292929; stroke: #f5f4f1; stroke-width: 4; paint-order: stroke; }
.ocean { font-weight: 600; font-size: 39px; fill: #5f7bb9; stroke: none; }
.sales .bubbles { fill: #e98a62; fill-opacity: .62; stroke: #b44a1c; stroke-width: 3; }
.profit .bubbles { fill: #ab2f80; fill-opacity: .6; stroke: #750a4c; stroke-width: 3; }
.bing { font: 600 28px "Open Sans"; fill: #727c8a; }
.credit { font: 400 30px "Liberation Sans", sans-serif; fill: #000; }
.credit .link { fill: #1f3a93; }
.credit path { stroke: #1f3a93; stroke-width: 3; }

.status { height: 20px; flex: none; display: flex; align-items: center; padding-top: 4px; padding-left: 1641px; background: #f4f4f4; border-top: 1px solid #dcdcdc; color: #605e5c; }
.status svg + svg { margin-left: -2px; }
.pct { margin: 0 14px 0 14px; width: 29px; font-size: 13.500px; line-height: 14px; }
</style>
